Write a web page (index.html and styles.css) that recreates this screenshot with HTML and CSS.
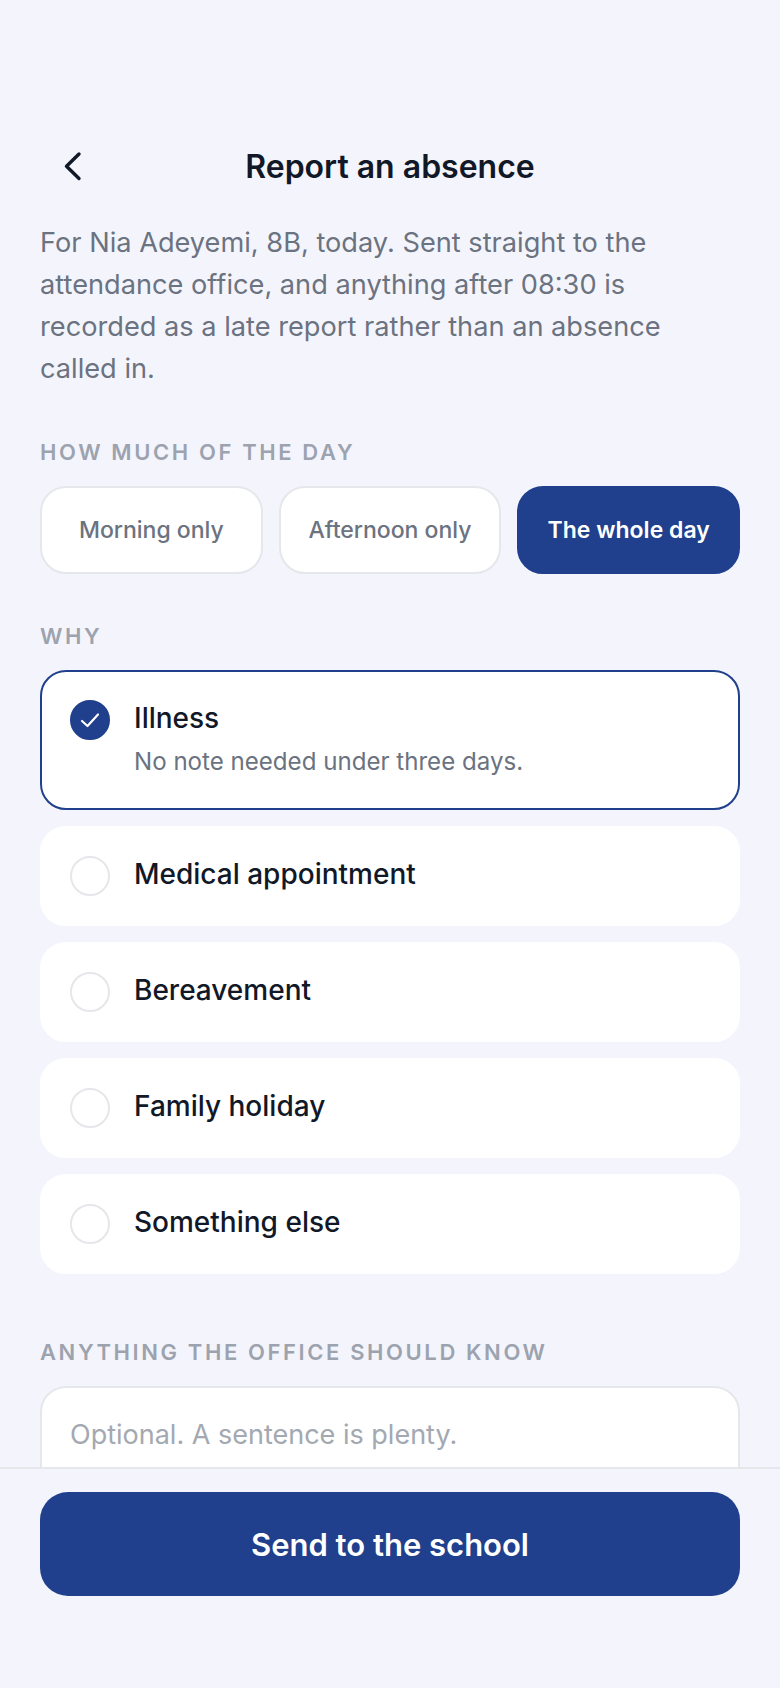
FILE: index.html
```html
<!DOCTYPE html>
<html lang="en">
<head>
    <meta charset="UTF-8">
    <meta name="viewport" content="width=device-width, initial-scale=1.0">
    <title>Report an absence</title>
    <link rel="stylesheet" href="styles.css">
</head>
<body>
    <main class="content">
        <header class="topbar">
            <button class="back" aria-label="Back">
                <svg width="40" height="40" viewBox="0 0 40 40" fill="none" stroke="#111827" stroke-width="3.4" stroke-linecap="round" stroke-linejoin="round">
                    <path d="M27 7 L14.5 19.3 L27 31.5"/>
                </svg>
            </button>
            <h1>Report an absence</h1>
        </header>
        <p class="intro">For Nia Adeyemi, 8B, today. Sent straight to the attendance office, and anything after 08:30 is recorded as a late report rather than an absence called in.</p>

        <div class="label">HOW MUCH OF THE DAY</div>
        <div class="chips">
            <button class="chip">Morning only</button>
            <button class="chip">Afternoon only</button>
            <button class="chip selected">The whole day</button>
        </div>

        <div class="label why">WHY</div>
        <div class="reasons">
            <div class="reason selected">
                <span class="radio">
                    <svg width="24" height="24" viewBox="0 0 24 24" fill="none" stroke="#fff" stroke-width="2.2" stroke-linecap="round" stroke-linejoin="round"><path d="M4 13 L9.5 18 L20 6.5"/></svg>
                </span>
                <div>
                    <div class="reason-name">Illness</div>
                    <div class="reason-note">No note needed under three days.</div>
                </div>
            </div>
            <div class="reason"><span class="radio"></span><div class="reason-name">Medical appointment</div></div>
            <div class="reason"><span class="radio"></span><div class="reason-name">Bereavement</div></div>
            <div class="reason"><span class="radio"></span><div class="reason-name">Family holiday</div></div>
            <div class="reason"><span class="radio"></span><div class="reason-name">Something else</div></div>
        </div>

        <div class="label notes-label">ANYTHING THE OFFICE SHOULD KNOW</div>
        <textarea class="notes" placeholder="Optional. A sentence is plenty."></textarea>
    </main>
    <footer class="footer">
        <button class="send">Send to the school</button>
    </footer>
</body>
</html>
```

FILE: styles.css
```css
* {
    box-sizing: border-box;
}
html, body {
    margin: 0;
    height: 100%;
}
body {
    height: 1688px;
    display: flex;
    flex-direction: column;
    background-color: #f4f5fc;
    color: #111827;
    font-family: Inter, "Noto Sans", sans-serif;
}
button {
    font-family: inherit;
    cursor: pointer;
}
.content {
    flex: 1;
    min-height: 0;
    overflow: hidden;
    padding: 127px 40px 0;
}
.topbar {
    position: relative;
    height: 78px;
    display: flex;
    align-items: center;
    justify-content: center;
}
.topbar h1 {
    margin: 0;
    font-size: 32px;
    font-weight: 600;
}
.back {
    position: absolute;
    left: 12px;
    top: 20px;
    width: 40px;
    height: 40px;
    padding: 0;
    border: none;
    background: none;
}
.intro {
    margin: 17px 0 0;
    font-size: 27.2px;
    line-height: 42px;
    color: #6b7280;
}
.label {
    margin-top: 48px;
    font-size: 22px;
    line-height: 28px;
    font-weight: 600;
    letter-spacing: 2.6px;
    color: #9ca3af;
}
.chips {
    display: grid;
    grid-template-columns: repeat(3, 1fr);
    gap: 16px;
    margin-top: 20px;
}
.chip {
    height: 88px;
    padding: 0;
    border: 2px solid #e5e7eb;
    border-radius: 26px;
    background-color: #fff;
    font-size: 23px;
    font-weight: 500;
    color: #6b7280;
}
.chip.selected {
    border-color: #203f8c;
    background-color: #203f8c;
    color: #fff;
    font-weight: 600;
}
.why {
    margin-top: 48px;
}
.reasons {
    display: flex;
    flex-direction: column;
    gap: 16px;
    margin-top: 20px;
}
.reason {
    display: flex;
    align-items: flex-start;
    gap: 24px;
    min-height: 100px;
    padding: 28px;
    border: 2px solid #fff;
    border-radius: 26px;
    background-color: #fff;
}
.reason.selected {
    border-color: #203f8c;
}
.radio {
    flex: none;
    display: flex;
    align-items: center;
    justify-content: center;
    width: 40px;
    height: 40px;
    border: 2px solid #e5e7eb;
    border-radius: 50%;
}
.reason.selected .radio {
    border-color: #203f8c;
    background-color: #203f8c;
}
.reason-name {
    font-size: 28px;
    line-height: 36px;
    font-weight: 500;
}
.reason-note {
    margin-top: 8px;
    font-size: 24.1px;
    line-height: 36px;
    color: #6b7280;
}
.notes-label {
    margin-top: 64px;
}
.notes {
    display: block;
    width: 100%;
    height: 160px;
    margin-top: 20px;
    padding: 28px;
    border: 2px solid #e5e7eb;
    border-radius: 26px;
    background-color: #fff;
    font-family: inherit;
    font-size: 27px;
    line-height: 38px;
    resize: none;
    outline: none;
}
.notes::placeholder {
    color: #a3a8b1;
    opacity: 1;
}
.footer {
    height: 221px;
    padding: 23px 40px 0;
    border-top: 2px solid #e5e7eb;
}
.send {
    width: 100%;
    height: 104px;
    padding: 0;
    border: none;
    border-radius: 28px;
    background-color: #203f8c;
    color: #fff;
    font-size: 31px;
    font-weight: 600;
}
```
